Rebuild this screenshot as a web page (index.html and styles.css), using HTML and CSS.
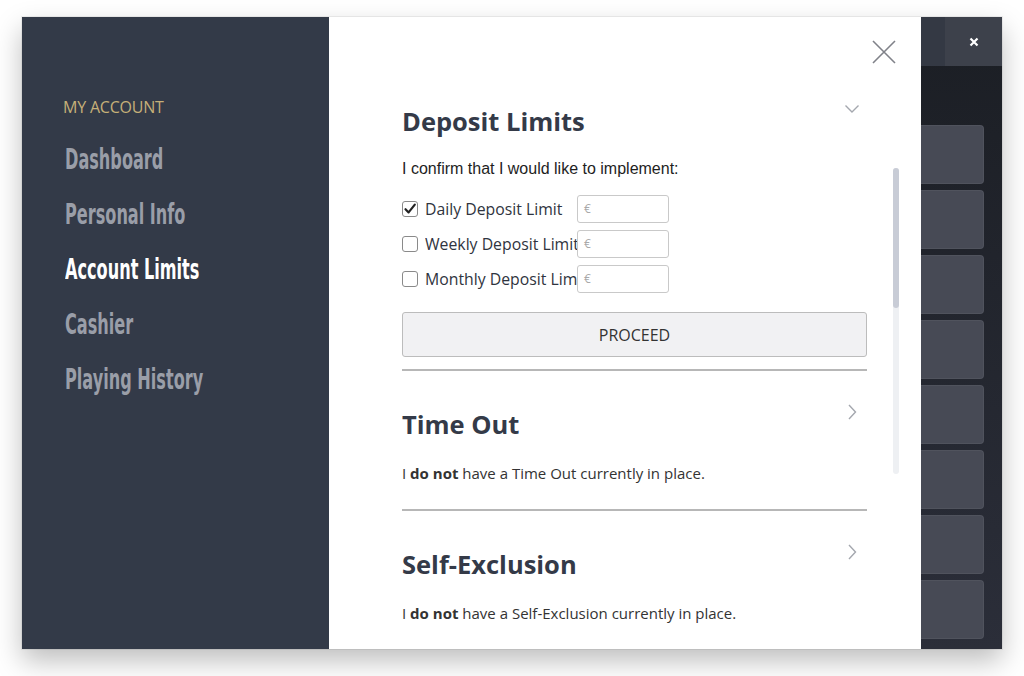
FILE: index.html
```html
<!DOCTYPE html>
<html lang="en">
<head>
<meta charset="utf-8">
<title>My Account - Account Limits</title>
<link rel="stylesheet" href="styles.css">
</head>
<body>
<div class="window">
  <aside class="sidebar">
    <div class="side-title">MY ACCOUNT</div>
    <nav class="side-nav">
      <a class="nav-item">Dashboard</a>
      <a class="nav-item">Personal Info</a>
      <a class="nav-item active">Account Limits</a>
      <a class="nav-item">Cashier</a>
      <a class="nav-item">Playing History</a>
    </nav>
  </aside>

  <main class="panel">
    <button class="panel-close" aria-label="Close">
      <svg width="24" height="24" viewBox="0 0 24 24"><path d="M1 1 L23 23 M23 1 L1 23" stroke="#808289" stroke-width="1.6" fill="none"/></svg>
    </button>

    <section class="section">
      <div class="sec-head">
        <h2 class="sec-title">Deposit Limits</h2>
        <svg class="chev" width="16" height="16" viewBox="0 0 16 16"><path d="M1.5 4.5 L8 11 L14.5 4.5" stroke="#a4a7ae" stroke-width="1.4" fill="none"/></svg>
      </div>
      <p class="confirm">I confirm that I would like to implement:</p>
      <div class="limit-row">
        <span class="check checked"><svg width="14" height="14" viewBox="0 0 14 14"><path d="M2.5 7.2 L5.6 10.4 L11.8 2.6" stroke="#222" stroke-width="2.2" fill="none" stroke-linecap="round" stroke-linejoin="round"/></svg></span>
        <span class="limit-label">Daily Deposit Limit</span>
        <span class="amount">€</span>
      </div>
      <div class="limit-row">
        <span class="check"></span>
        <span class="limit-label">Weekly Deposit Limit</span>
        <span class="amount">€</span>
      </div>
      <div class="limit-row">
        <span class="check"></span>
        <span class="limit-label">Monthly Deposit Limit</span>
        <span class="amount">€</span>
      </div>
      <button class="proceed">PROCEED</button>
      <div class="divider"></div>
    </section>

    <section class="section">
      <div class="sec-head">
        <h2 class="sec-title">Time Out</h2>
        <svg class="chev chev-r" width="16" height="16" viewBox="0 0 16 16"><path d="M5 1 L11.5 8 L5 15" stroke="#a4a7ae" stroke-width="1.4" fill="none"/></svg>
      </div>
      <p class="status">I <b>do not</b> have a Time Out currently in place.</p>
      <div class="divider"></div>
    </section>

    <section class="section">
      <div class="sec-head">
        <h2 class="sec-title">Self-Exclusion</h2>
        <svg class="chev chev-r" width="16" height="16" viewBox="0 0 16 16"><path d="M5 1 L11.5 8 L5 15" stroke="#a4a7ae" stroke-width="1.4" fill="none"/></svg>
      </div>
      <p class="status">I <b>do not</b> have a Self-Exclusion currently in place.</p>
    </section>

    <div class="scrollbar"><div class="scroll-thumb"></div></div>
  </main>

  <div class="backdrop">
    <div class="bd-top">
      <div class="bd-bar"></div>
      <div class="bd-close">
        <svg width="10" height="10" viewBox="0 0 10 10"><path d="M1.5 1.5 L8.5 8.5 M8.5 1.5 L1.5 8.5" stroke="#fff" stroke-width="2.2" fill="none"/></svg>
      </div>
    </div>
    <div class="tiles">
      <div class="tile"></div><div class="tile"></div><div class="tile"></div><div class="tile"></div>
      <div class="tile"></div><div class="tile"></div><div class="tile"></div><div class="tile"></div>
    </div>
  </div>
</div>
</body>
</html>
```

FILE: styles.css
```css
* { box-sizing: border-box; }
html, body { margin: 0; padding: 0; background: #ffffff; }
body { width: 1024px; height: 676px; overflow: hidden; font-family: "Open Sans", sans-serif; }

.window {
  margin: 17px 0 0 22px;
  width: 980px;
  height: 632px;
  display: flex;
  overflow: hidden;
  box-shadow: 0 12px 26px rgba(0,0,0,0.26), 0 0 0 1px rgba(0,0,0,0.06);
}

/* Sidebar */
.sidebar {
  width: 307px;
  flex: none;
  background: #333a48;
  padding: 80px 0 0 41px;
}
.side-title {
  font-family: "Open Sans", sans-serif;
  font-size: 16px;
  letter-spacing: -0.2px;
  line-height: 20px;
  color: #c6b078;
}
.side-nav { display: flex; flex-direction: column; margin-top: 23px; }
.nav-item {
  display: block;
  height: 55px;
  line-height: 40px;
  margin-left: 2px;
  font-family: "DejaVu Sans Condensed", "DejaVu Sans", sans-serif;
  font-stretch: condensed;
  font-weight: 700;
  font-size: 28px;
  color: #9a9ea8;
  transform: scaleX(0.64);
  transform-origin: left center;
  white-space: nowrap;
}
.nav-item.active { color: #ffffff; }

/* Main panel */
.panel {
  position: relative;
  width: 592px;
  flex: none;
  background: #ffffff;
  padding: 86px 54px 0 73px;
  overflow: hidden;
}
.panel-close {
  position: absolute;
  top: 23px;
  right: 25px;
  width: 24px;
  height: 24px;
  padding: 0;
  border: 0;
  background: none;
}
.panel-close svg { display: block; }

.sec-head { display: flex; justify-content: space-between; align-items: flex-start; }
.sec-title {
  margin: 0;
  font-family: "Open Sans", sans-serif;
  font-weight: 700;
  font-size: 25.5px;
  line-height: 36px;
  color: #343a48;
}
.chev { flex: none; margin: -2px 7px 0 0; }
.chev-r { margin-top: -2px; }

.confirm {
  margin: 20px 0 16px;
  font-family: "Liberation Sans", Arial, sans-serif;
  font-size: 16px;
  line-height: 20px;
  color: #1e1e1e;
}

.limit-row { display: flex; align-items: center; height: 28px; margin-bottom: 7px; }
.limit-row:last-of-type { margin-bottom: 0; }
.check {
  width: 16px;
  height: 16px;
  flex: none;
  border: 1px solid #8a8a8a;
  border-radius: 3px;
  background: #fff;
  display: flex;
  align-items: center;
  justify-content: center;
}
.limit-label {
  width: 152px;
  margin-left: 7px;
  flex: none;
  overflow: hidden;
  white-space: nowrap;
  font-size: 15.8px;
  color: #2f3440;
}
.amount {
  width: 92px;
  height: 28px;
  flex: none;
  border: 1px solid #c9c9c9;
  border-radius: 3px;
  padding-left: 6px;
  font-size: 12px;
  line-height: 26px;
  color: #a9a9a9;
}

.proceed {
  display: block;
  width: 100%;
  height: 45px;
  margin-top: 19px;
  border: 1px solid #bcbcbc;
  border-radius: 3px;
  background: #f1f1f3;
  font-family: "Open Sans", sans-serif;
  font-size: 16px;
  color: #333;
}
.divider { height: 2px; background: #b7b7b7; margin-top: 12px; }

.section + .section { margin-top: 35px; }

.status {
  margin: 20px 0 0;
  font-size: 15px;
  line-height: 22px;
  color: #333;
}
.status + .divider { margin-top: 25px; }

.scrollbar {
  position: absolute;
  left: 564px;
  top: 151px;
  width: 6px;
  height: 306px;
  border-radius: 3px;
  background: #eef0f3;
}
.scroll-thumb { height: 140px; border-radius: 3px; background: #c8ccd6; }

/* Backdrop strip */
.backdrop {
  flex: 1;
  display: flex;
  flex-direction: column;
  background: linear-gradient(#1b1e24, #2b2e39);
}
.bd-top { display: flex; height: 49px; flex: none; }
.bd-bar { flex: 1; background: #343944; }
.bd-close {
  width: 57px;
  background: #3d414b;
  display: flex;
  align-items: center;
  justify-content: center;
}
.bd-close svg { display: block; }
.tiles {
  display: flex;
  flex-direction: column;
  gap: 6px;
  padding: 59px 18px 0 0;
}
.tile {
  height: 59px;
  flex: none;
  background: #474a55;
  border: 1px solid rgba(255,255,255,0.05);
  border-left: 0;
  border-radius: 0 4px 4px 0;
}
```
